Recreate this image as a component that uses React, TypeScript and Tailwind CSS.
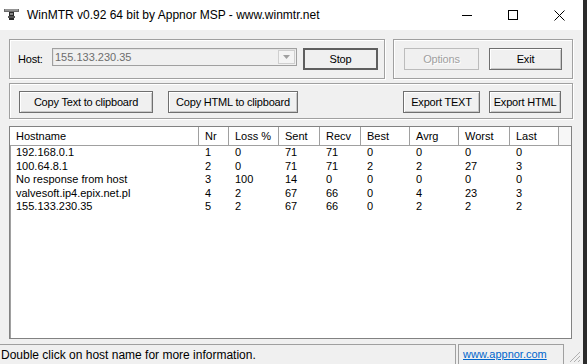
import React from 'react';

const rows = [
  ['192.168.0.1', '1', '0', '71', '71', '0', '0', '0', '0'],
  ['100.64.8.1', '2', '0', '71', '71', '2', '2', '27', '3'],
  ['No response from host', '3', '100', '14', '0', '0', '0', '0', '0'],
  ['valvesoft.ip4.epix.net.pl', '4', '2', '67', '66', '0', '4', '23', '3'],
  ['155.133.230.35', '5', '2', '67', '66', '0', '2', '2', '2'],
];

const headers = ['Hostname', 'Nr', 'Loss %', 'Sent', 'Recv', 'Best', 'Avrg', 'Worst', 'Last'];

const cols = 'grid grid-cols-[189px_30px_50px_41px_41px_49px_49px_51px_49px_1fr]';

function Btn({ label, w, primary, disabled }: { label: string; w: string; primary?: boolean; disabled?: boolean }) {
  const border = primary
    ? 'border-2 border-[#5f5f5f]'
    : disabled
    ? 'border border-[#bcbcbc]'
    : 'border border-[#6f6f6f] shadow-[inset_1px_1px_0_#ffffff,inset_-1px_-1px_0_#c8c8c8]';
  return (
    <div
      className={`${w} h-[22px] flex items-center justify-center bg-[#f0f0f0] text-[11px] tracking-[-0.2px] ${border} ${
        disabled ? 'text-[#a0a0a0] [text-shadow:1px_1px_0_#ffffff]' : 'text-black'
      }`}
    >
      {label}
    </div>
  );
}

function Group({ className, children }: { className: string; children: React.ReactNode }) {
  return (
    <div className={`border border-[#a0a0a0] shadow-[inset_1px_1px_0_#ffffff,1px_1px_0_#ffffff] ${className}`}>
      {children}
    </div>
  );
}

export default function App() {
  return (
    <div className="w-[587px] h-[364px] overflow-hidden flex bg-[#f0f0f0] font-['Liberation_Sans',Arial,sans-serif] text-black">
      <div className="w-[583px] flex flex-col">
        {/* Title bar */}
        <div className="h-[30px] bg-white flex items-center shrink-0">
          <svg className="ml-[4px] w-[15px] h-[12px]" viewBox="0 0 15 12">
            <rect x="0" y="0" width="15" height="3" fill="#6b6b6b" />
            <rect x="1" y="0.5" width="13" height="1" fill="#bdbdbd" />
            <rect x="5" y="3" width="5" height="8" fill="#2a2a2a" />
            <rect x="4" y="7" width="7" height="2" fill="#555" />
            <rect x="6" y="4" width="3" height="2" fill="#888" />
          </svg>
          <span className="ml-[8px] text-[12px] text-black">
            WinMTR v0.92 64 bit by Appnor MSP - www.winmtr.net
          </span>
          <div className="ml-auto flex items-center h-full">
            <div className="w-[46px] h-full flex items-center justify-center">
              <div className="w-[10px] h-px bg-black" />
            </div>
            <div className="w-[46px] h-full flex items-center justify-center">
              <div className="w-[10px] h-[10px] border border-black" />
            </div>
            <div className="w-[46px] h-full flex items-center justify-center mr-[1px]">
              <svg className="w-[11px] h-[11px]" viewBox="0 0 11 11">
                <path d="M0.5 0.5L10.5 10.5M10.5 0.5L0.5 10.5" stroke="#000" strokeWidth="1" />
              </svg>
            </div>
          </div>
        </div>

        {/* Main */}
        <div className="pl-[9px] pt-[9px] flex flex-col">
          <div className="flex gap-[8px]">
            <Group className="w-[376px] h-[40px] pt-[8px] pl-[8px] flex items-start">
              <div className="w-[34px] h-[22px] flex items-center text-[11px] tracking-[-0.2px]">Host:</div>
              <div className="w-[245px] h-[18px] flex items-center border border-[#a0a0a0] shadow-[inset_1px_1px_0_#e3e3e3] bg-[#f0f0f0]">
                <span className="pl-[2px] text-[11px] text-[#6d6d6d] flex-1">155.133.230.35</span>
                <div className="w-[17px] h-[14px] mr-[1px] border border-[#cfcfcf] bg-[#f4f4f4] flex items-center justify-center">
                  <svg className="w-[7px] h-[4px]" viewBox="0 0 7 4">
                    <path d="M0 0H7L3.5 4Z" fill="#a0a0a0" />
                  </svg>
                </div>
              </div>
              <div className="ml-[6px]">
                <Btn label="Stop" w="w-[75px]" primary />
              </div>
            </Group>
            <Group className="w-[180px] h-[40px] pt-[8px] pl-[10px] flex items-start gap-[10px]">
              <Btn label="Options" w="w-[75px]" disabled />
              <Btn label="Exit" w="w-[73px]" />
            </Group>
          </div>

          <Group className="mt-[4px] w-[564px] h-[36px] pt-[7px] pl-[9px] pr-[11px] flex items-start">
            <Btn label="Copy Text to clipboard" w="w-[134px]" />
            <div className="ml-[15px]">
              <Btn label="Copy HTML to clipboard" w="w-[130px]" />
            </div>
            <div className="ml-auto flex gap-[9px]">
              <Btn label="Export TEXT" w="w-[77px]" />
              <Btn label="Export HTML" w="w-[72px]" />
            </div>
          </Group>

          {/* List */}
          <div className="mt-[7px] w-[563px] h-[213px] border border-[#828282] bg-white shadow-[inset_1px_1px_0_#a0a0a0] text-[11px] overflow-hidden">
            <div className={`${cols} h-[19px] border-b border-[#a0a0a0] bg-white`}>
              {headers.map((h) => (
                <div key={h} className="pl-[6px] border-r border-[#a0a0a0] flex items-center leading-none">
                  {h}
                </div>
              ))}
              <div className="bg-[#f7f7f7]" />
            </div>
            {rows.map((r) => (
              <div key={r[0]} className={`${cols} h-[13.5px] leading-[13.5px]`}>
                {r.map((c, i) => (
                  <div key={i} className="pl-[6px] whitespace-nowrap">
                    {c}
                  </div>
                ))}
                <div />
              </div>
            ))}
          </div>
        </div>

        {/* Status bar */}
        <div className="mt-[5px] flex-1 flex">
          <div className="w-[456px] border-t border-r border-[#a0a0a0] flex items-center pl-[1px] text-[12px]">
            Double click on host name for more information.
          </div>
          <div className="ml-[2px] w-[106px] border-t border-l border-r border-[#a0a0a0] flex items-center pl-[4px]">
            <span className="text-[11px] text-[#0066cc] underline">www.appnor.com</span>
          </div>
          <div className="flex-1 flex items-end justify-end pr-[2px] pb-[1px]">
            <svg className="w-[12px] h-[12px]" viewBox="0 0 12 12">
              <path d="M11 1L1 11M11 5L5 11M11 9L9 11" stroke="#b0b0b0" strokeWidth="1" />
            </svg>
          </div>
        </div>
      </div>
      <div className="flex-1 bg-[#2b2b2b]" />
    </div>
  );
}
